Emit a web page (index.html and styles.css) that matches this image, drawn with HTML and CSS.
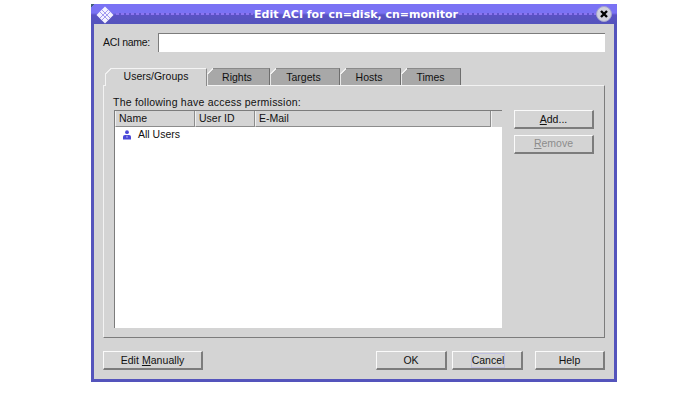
FILE: index.html
```html
<!DOCTYPE html>
<html lang="en">
<head>
<meta charset="utf-8">
<title>Edit ACI</title>
<link rel="stylesheet" href="styles.css">
</head>
<body>
<div class="window">
  <div class="titlebar">
    <svg class="logo" width="18" height="18" viewBox="0 0 18 18">
      <path d="M9 0.5 L17.5 9 L9 17.5 L0.5 9 Z" fill="#f4f2ff"/>
      <path d="M6 4 L14 12 M4 6 L12 14 M12 4 L4 12 M14 6 L6 14" stroke="#a29bf0" stroke-width="1" fill="none"/>
    </svg>
    <div class="rule"></div>
    <div class="title">Edit ACI for cn=disk, cn=monitor</div>
    <div class="rule"></div>
    <div class="close">
      <svg width="10" height="10" viewBox="0 0 10 10"><path d="M2 2 L8 8 M8 2 L2 8" stroke="#000" stroke-width="2.4"/></svg>
    </div>
  </div>
  <div class="body">
    <div class="name-row">
      <label class="name-label">ACI name:</label>
      <div class="input"></div>
    </div>
    <div class="tabs">
      <div class="tab active t1"><span>Users/Groups</span></div>
      <div class="tab t2"><span>Rights</span></div>
      <div class="tab t3"><span>Targets</span></div>
      <div class="tab t4"><span>Hosts</span></div>
      <div class="tab t5"><span>Times</span></div>
    </div>
    <div class="panel">
      <div class="left">
        <div class="caption">The following have access permission:</div>
        <div class="table">
          <div class="thead">
            <div class="th c1">Name</div>
            <div class="th c2">User ID</div>
            <div class="th c3">E-Mail</div>
            <div class="th c4"></div>
          </div>
          <div class="row">
            <svg class="user" width="10" height="10" viewBox="0 0 10 10">
              <circle cx="5" cy="2.2" r="1.9" fill="#4a48d8"/>
              <path d="M1 9.5 L1 6.5 Q1 5 3 5 L7 5 Q9 5 9 6.5 L9 9.5 Z" fill="#4a48d8"/>
              <path d="M5 5.2 L4.4 7 L5 8 L5.6 7 Z" fill="#d8d8ff"/>
            </svg>
            <span>All Users</span>
          </div>
        </div>
      </div>
      <div class="side">
        <div class="btn side-btn"><span><u>A</u>dd...</span></div>
        <div class="btn side-btn disabled"><span><u>R</u>emove</span></div>
      </div>
    </div>
    <div class="footer">
      <div class="btn edit"><span>Edit <u>M</u>anually</span></div>
      <div class="spacer"></div>
      <div class="btn ok"><span>OK</span></div>
      <div class="btn cancel"><span class="focus">Cancel</span></div>
      <div class="btn help"><span>Help</span></div>
    </div>
  </div>
</div>
</body>
</html>
```
FILE: styles.css
```css
* { box-sizing: border-box; }
html, body { margin: 0; padding: 0; background: #fff; }
body { font-family: "Liberation Sans", Arial, sans-serif; font-size: 10.5px; color: #111; }
.window {
  width: 526px; height: 378px; margin: 4px 0 0 91px;
  background: #5454bc; display: flex; flex-direction: column;
  padding: 0 3px 3px 3px;
}
.titlebar {
  height: 20px; margin: 0 -3px; padding: 0 5px 0 5px; display: flex; align-items: center;
  background: linear-gradient(#7a72f4 0, #7a72f4 9px, #5a52c4 11px, #5454bc 100%);
  position: relative;
}
.titlebar::before {
  content: ""; position: absolute; left: 0; top: 0; width: 4px; height: 4px;
  background: linear-gradient(135deg, #3f5f78 50%, transparent 50%);
}
.logo { flex: none; margin-right: 2px; margin-top: 2px; }
.rule { flex: 1; height: 2px; margin-top: -1px; background: repeating-linear-gradient(90deg, #8a74f0 0 3px, #5f54cc 3px 5px); }
.title { color: #fff; font-family: "DejaVu Sans", sans-serif; font-weight: 700; font-size: 11px; padding: 0 1px; white-space: nowrap; }
.close {
  flex: none; width: 16px; height: 16px; border-radius: 50%; background: #d0d0dc; margin-left: 0;
  border: 1px solid #a4a4cc; display: flex; align-items: center; justify-content: center;
}
.close svg { display: block; }
.body { flex: 1; background: #d4d4d4; padding: 9px; display: flex; flex-direction: column; }
.name-row { display: flex; align-items: center; height: 19px; }
.name-label { width: 55px; letter-spacing: -0.3px; margin-top: -2px; }
.input {
  flex: 1; height: 19px; background: #fff;
  border-top: 1px solid #7c7c7c; border-left: 1px solid #7c7c7c;
}
.tabs { display: flex; height: 17px; margin-top: 16px; padding-left: 2px; }
.tab {
  background: #a8a8a8; height: 17px; display: flex; align-items: center; justify-content: center;
  border-top: 1px solid #8a8a8a; border-right: 1px solid #6e6e6e; border-left: 1px solid #e8e8e8;
  position: relative; padding-bottom: 1px;
}
.tab::before {
  content: ""; position: absolute; left: -1px; top: -1px; width: 6px; height: 6px;
  background: linear-gradient(135deg, #d4d4d4 48%, #f0f0f0 48%, #f0f0f0 62%, transparent 62%);
}
.tab.active { background: #d4d4d4; border-top-color: #f4f4f4; border-left-color: #f4f4f4; border-right-color: #8a8a8a; height: 18px; z-index: 1; padding-bottom: 3px; }
.tab span { position: relative; }
.t1 { width: 102px; }
.t2 { width: 63px; padding-right: 3px; }
.t3 { width: 70px; padding-right: 3px; }
.t4 { width: 61px; padding-right: 3px; }
.t5 { width: 60px; padding-right: 1px; }
.panel {
  height: 253px; display: flex; padding: 10px 10px 9px 9px; gap: 12px;
  border-top: 1px solid #f2f2f2; border-left: 1px solid #f2f2f2;
  border-right: 1px solid #7c7c7c; border-bottom: 1px solid #7c7c7c;
}
.left { width: 389px; display: flex; flex-direction: column; }
.caption { height: 14px; line-height: 12px; white-space: nowrap; letter-spacing: 0.22px; }
.table { flex: 1; background: #fff; border-top: 1px solid #7c7c7c; border-left: 1px solid #7c7c7c; margin-left: 1px; }
.thead { display: flex; height: 16px; background: #d4d4d4; }
.th { height: 16px; line-height: 14px; padding-left: 3px; border-right: 1px solid #8c8c8c; border-bottom: 1px solid #8c8c8c; border-left: 1px solid #f0f0f0; white-space: nowrap; }
.c1 { width: 80px; }
.c2 { width: 60px; }
.c3 { width: 236px; }
.c4 { flex: 1; border-right: 0; border-bottom: 0; }
.row { display: flex; align-items: center; height: 14px; padding-left: 7px; }
.row span { margin-left: 6px; }
.user { flex: none; margin-top: 2px; }
.side { display: flex; flex-direction: column; gap: 6px; width: 80px; margin-top: 14px; }
.btn {
  height: 19px; display: flex; align-items: center; justify-content: center; background: #d4d4d4;
  border-top: 1px solid #fafafa; border-left: 1px solid #fafafa;
  border-right: 2px solid #7c7c7c; border-bottom: 2px solid #7c7c7c;
}
.disabled { color: #8c8c8c; padding-bottom: 2px; }
.footer { display: flex; height: 19px; margin-top: 13px; }
.spacer { flex: 1; }
.edit { width: 100px; letter-spacing: 0.05px; }
.ok { width: 71px; }
.cancel { width: 71px; margin-left: 5px; }
.help { width: 70px; margin-left: 12px; }
.focus { display: block; line-height: 13px; margin-left: 2px; box-shadow: 0 0 0 1px #c0c0e0; }
```
